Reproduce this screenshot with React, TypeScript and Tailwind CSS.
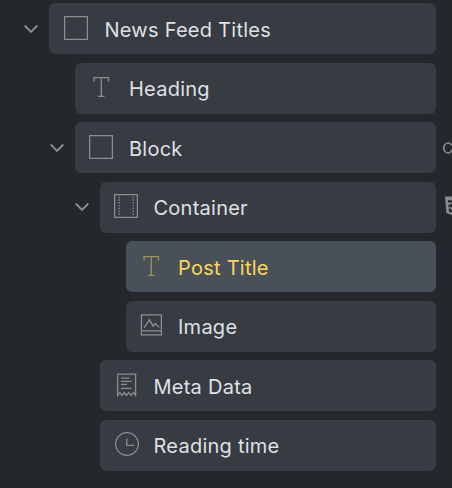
import { useState } from 'react';
import type { ReactNode } from 'react';

type IconName = 'box' | 'text' | 'container' | 'image' | 'receipt' | 'clock';

type TreeItem = {
  id: string;
  label: string;
  icon: IconName;
  indent: string;
  spacing: string;
  expandable?: boolean;
  badge?: 'link' | 'css';
};

const items: TreeItem[] = [
  { id: 'news', label: 'News Feed Titles', icon: 'box', indent: 'pl-[49px]', spacing: 'pl-[15px] gap-[16.5px]', expandable: true },
  { id: 'heading', label: 'Heading', icon: 'text', indent: 'pl-[75px]', spacing: 'pl-[14px] gap-4' },
  { id: 'block', label: 'Block', icon: 'box', indent: 'pl-[75px]', spacing: 'pl-[14px] gap-4', expandable: true, badge: 'link' },
  { id: 'container', label: 'Container', icon: 'container', indent: 'pl-[100px]', spacing: 'pl-[14px] gap-[15.5px]', expandable: true, badge: 'css' },
  { id: 'title', label: 'Post Title', icon: 'text', indent: 'pl-[126px]', spacing: 'pl-[13px] gap-[15px]' },
  { id: 'image', label: 'Image', icon: 'image', indent: 'pl-[126px]', spacing: 'pl-[13px] gap-[15px]' },
  { id: 'meta', label: 'Meta Data', icon: 'receipt', indent: 'pl-[100px]', spacing: 'pl-[14px] gap-[15.5px]' },
  { id: 'time', label: 'Reading time', icon: 'clock', indent: 'pl-[100px]', spacing: 'pl-[14.5px] gap-[15px]' },
];

const shapes: Record<IconName, ReactNode> = {
  box: <rect x="0.6" y="0.6" width="22.8" height="22.8" />,
  text: <path d="M5 6.5V2.6H19.5V6.5M12.3 2.6V21.4M9 21.4H15.5" />,
  container: (
    <>
      <rect x="0.6" y="0.6" width="22.8" height="22.8" />
      <path d="M5.2 2.5V22M19.2 2.5V22" strokeDasharray="1.4 1.4" />
    </>
  ),
  image: (
    <>
      <rect x="2.4" y="1.9" width="20" height="20" />
      <path d="M2.4 17.9H22.4M5 14.8L10.5 6.8L14.2 13.2L16.2 10.5L20.2 14.3" />
    </>
  ),
  receipt: (
    <>
      <path d="M3.6 22.5V1.1H21.6V22.5L19.5 19.5L17 22.5L14.8 19.5L12.6 22.5L10.2 19.5L8 22.5L5.7 19.5L3.6 22.5Z" />
      <path d="M7 5.2H15.5M7 8.4H17.5M7 11.4H13M7 15.4H17.5" />
    </>
  ),
  clock: (
    <>
      <circle cx="12" cy="12" r="11.4" />
      <path d="M11.7 6.5V13.3H19.5" />
    </>
  ),
};

function ItemIcon({ name }: { name: IconName }) {
  return (
    <svg viewBox="0 0 24 24" fill="none" stroke="currentColor" strokeWidth="1.3" className="mb-0.5 size-6 shrink-0">
      {shapes[name]}
    </svg>
  );
}

function Badge({ type }: { type: 'link' | 'css' }) {
  if (type === 'link') {
    return (
      <svg width="24" height="14" viewBox="0 0 24 14" fill="none" stroke="currentColor" strokeWidth="1.7" className="shrink-0">
        <path d="M8.6 4.2C7.8 2.7 6.9 2 5.4 2A4.6 5 0 0 0 5.4 12C6.9 12 7.8 11.2 8.6 9.8L13 4.2A4.6 5 0 1 1 13 9.8" />
      </svg>
    );
  }
  return (
    <svg width="16" height="20" viewBox="0 0 16 20" className="mb-0.5 ml-[1.5px] shrink-0">
      <path
        fill="currentColor"
        fillRule="evenodd"
        d="M0 0.5H16L14.6 17L8 19.5L1.4 17ZM2.9 4.2L3.1 6.4H9.6L3.3 9.2L3.5 11.3H10.3L10 13.8L8 14.6L6 13.8L5.8 12.5H3.6L4 15.5L8 17L12 15.5L13.1 4.2Z"
      />
    </svg>
  );
}

export default function App() {
  const [selected, setSelected] = useState('title');

  return (
    <div className="h-[488px] w-[452px] overflow-hidden bg-[#24272b] pt-[3px] font-['Inter',sans-serif] text-[#8b8e91]">
      <div className="flex flex-col gap-[8.5px]">
        {items.map(item => (
          <div key={item.id} className={`relative flex h-[51px] pr-4 ${item.indent}`}>
            {/* Toggle */}
            {item.expandable && (
              <button className="-ml-[26px] flex w-[26px] shrink-0 items-center">
                <svg width="16" height="10" viewBox="0 0 16 10" fill="none" stroke="currentColor" strokeWidth="1.9">
                  <path d="M1.7 1.5L8 7.8L14.3 1.5" />
                </svg>
              </button>
            )}

            <button
              onClick={() => setSelected(item.id)}
              className={`flex flex-1 items-center rounded-md text-left ${item.spacing} ${
                selected === item.id ? 'bg-[#48505a] text-[#a1934f]' : 'bg-[#373b42]'
              }`}
            >
              <ItemIcon name={item.icon} />
              <span
                className={`pt-0.5 text-[20px] leading-6 tracking-[0.25px] whitespace-nowrap ${
                  selected === item.id ? 'text-[#fad85c]' : 'text-[#dfe1e3]'
                }`}
              >
                {item.label}
              </span>
            </button>

            {/* Badge running past the panel edge */}
            {item.badge && (
              <div className="absolute inset-y-0 left-[443px] flex w-6 items-center">
                <Badge type={item.badge} />
              </div>
            )}
          </div>
        ))}
      </div>
    </div>
  );
}
